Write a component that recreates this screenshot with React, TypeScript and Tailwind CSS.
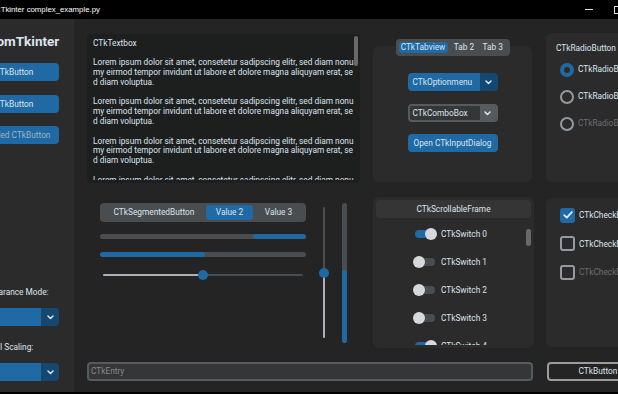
import React from "react";

const TXT = "text-[#dce4ee]";
const SM = "text-[8.3px] leading-none whitespace-nowrap";

function Chevron() {
  return (
    <svg width="7" height="5" viewBox="0 0 7 5" fill="none">
      <path d="M1 1L3.5 3.5L6 1" stroke="#dce4ee" strokeWidth="1.5" strokeLinecap="round" strokeLinejoin="round" />
    </svg>
  );
}

function OptionMenu({ label }: { label: string }) {
  return (
    <div className="flex h-[18px] w-[90px] rounded-[4px] overflow-hidden shrink-0">
      <div className={`flex-1 bg-[#1f6aa5] flex items-center pl-[5px] ${SM} ${TXT}`}>{label}</div>
      <div className="w-[18px] bg-[#144870] flex items-center justify-center">
        <Chevron />
      </div>
    </div>
  );
}

function ComboBox({ label }: { label: string }) {
  return (
    <div className="flex h-[18px] w-[90px] rounded-[4px] overflow-hidden border-2 border-[#565b5e] bg-[#343638] shrink-0">
      <div className={`flex-1 flex items-center pl-[3px] ${SM} ${TXT}`}>{label}</div>
      <div className="w-[16px] bg-[#565b5e] flex items-center justify-center">
        <Chevron />
      </div>
    </div>
  );
}

function Btn({ label, disabled }: { label: string; disabled?: boolean }) {
  return (
    <div
      className={`h-[18px] w-[90px] shrink-0 rounded-[4px] bg-[#1f6aa5] flex items-center justify-center ${SM} ${
        disabled ? "text-[#9fb1c2]" : TXT
      }`}
    >
      {label}
    </div>
  );
}

function Sidebar() {
  return (
    <div className="w-[74px] shrink-0 bg-[#2b2b2b] overflow-hidden">
      <div className="w-[90px] ml-[-31px] h-full flex flex-col items-center">
        <div className="mt-[13px] h-[20px] flex items-center justify-center">
          <span className={`text-[13.5px] font-bold leading-none whitespace-nowrap ${TXT}`}>CustomTkinter</span>
        </div>
        <div className="mt-[11px]">
          <Btn label="CTkButton" />
        </div>
        <div className="mt-[14px]">
          <Btn label="CTkButton" />
        </div>
        <div className="mt-[13px]">
          <Btn label="Disabled CTkButton" disabled />
        </div>
        <div className="flex-1" />
        <div className={`h-[12px] flex items-center ${SM} ${TXT}`}>Appearance Mode:</div>
        <div className="mt-[10px]">
          <OptionMenu label="Dark" />
        </div>
        <div className={`mt-[15px] h-[12px] flex items-center ${SM} ${TXT}`}>UI Scaling:</div>
        <div className="mt-[10px] mb-[11px]">
          <OptionMenu label="100%" />
        </div>
      </div>
    </div>
  );
}

const PARA = [
  "Lorem ipsum dolor sit amet, consetetur sadipscing elitr, sed diam nonu",
  "my eirmod tempor invidunt ut labore et dolore magna aliquyam erat, se",
  "d diam voluptua.",
];

function Textbox() {
  const lines: string[] = ["CTkTextbox", ""];
  for (let i = 0; i < 4; i++) {
    lines.push(...PARA, "");
  }
  return (
    <div className="mt-[1px] ml-[13px] w-[273px] h-[149px] shrink-0 rounded-[4px] bg-[#1d1e1e] flex">
      <div className="flex-1 pt-[4px] pl-[6px]">
        <div className="h-[142px] overflow-hidden">
          {lines.map((l, i) => (
            <div key={i} className={`h-[9.8px] flex items-center text-[8.3px] whitespace-nowrap ${TXT}`}>
              {l || "\u00a0"}
            </div>
          ))}
        </div>
      </div>
      <div className="w-[5px] mr-[2px] mt-[2px]">
        <div className="h-[30px] rounded-full bg-[#696969]" />
      </div>
    </div>
  );
}

function Tabview() {
  return (
    <div className="mt-[6px] ml-[13px] w-[159px] shrink-0 flex flex-col items-center">
      <div className="relative z-10 mb-[-10px] h-[17px] rounded-[4px] bg-[#4a4d50] p-[3px] flex items-stretch">
        <div className={`w-[49px] rounded-[3px] bg-[#1f6aa5] flex items-center justify-center ${SM} ${TXT}`}>CTkTabview</div>
        <div className={`w-[33px] flex items-center justify-center ${SM} ${TXT}`}>Tab 2</div>
        <div className={`w-[26px] flex items-center justify-start pl-[2px] ${SM} ${TXT}`}>Tab 3</div>
      </div>
      <div className="w-full h-[136px] rounded-[6px] bg-[#2b2b2b] flex flex-col items-center">
        <div className="mt-[27px]">
          <OptionMenu label="CTkOptionmenu" />
        </div>
        <div className="mt-[13px]">
          <ComboBox label="CTkComboBox" />
        </div>
        <div className="mt-[12px]">
          <Btn label="Open CTkInputDialog" />
        </div>
      </div>
    </div>
  );
}

function Radio({ checked, disabled }: { checked?: boolean; disabled?: boolean }) {
  return (
    <div className="h-[27px] flex items-center">
      {checked ? (
        <div className="w-[14px] h-[14px] rounded-full border-[4px] border-[#1f6aa5] bg-[#2b2b2b]" />
      ) : (
        <div className="w-[14px] h-[14px] rounded-full border-2 border-[#949a9f]" />
      )}
      <span className={`ml-[4px] ${SM} ${disabled ? "text-[#6c6e70]" : TXT}`}>CTkRadioButton</span>
    </div>
  );
}

function RadioFrame() {
  return (
    <div className="ml-[14px] w-[140px] h-[149px] shrink-0 rounded-[6px] bg-[#2b2b2b] flex flex-col">
      <div className={`mt-[9px] pl-[10px] h-[12px] flex items-center ${SM} ${TXT}`}>CTkRadioButton Group:</div>
      <div className="mt-[2px] pl-[14px] flex flex-col">
        <Radio checked />
        <Radio />
        <Radio disabled />
      </div>
    </div>
  );
}

function SliderArea() {
  return (
    <div className="ml-[13px] w-[273px] h-[151px] shrink-0 flex">
      <div className="ml-[13px] w-[206px] flex flex-col">
        <div className="mt-[6px] h-[19px] rounded-[4px] bg-[#4a4d50] p-[2px] flex">
          <div className={`w-[104px] flex items-center justify-center ${SM} ${TXT}`}>CTkSegmentedButton</div>
          <div className={`w-[47px] rounded-[3px] bg-[#1f6aa5] flex items-center justify-center ${SM} ${TXT}`}>Value 2</div>
          <div className={`flex-1 flex items-center justify-center ${SM} ${TXT}`}>Value 3</div>
        </div>
        <div className="mt-[12px] h-[5px] rounded-full bg-[#4a4d50] flex justify-end overflow-hidden">
          <div className="w-[53px] bg-[#1f6aa5] rounded-full" />
        </div>
        <div className="mt-[13px] h-[5px] rounded-full bg-[#4a4d50] flex overflow-hidden">
          <div className="w-[105px] bg-[#1f6aa5] rounded-full" />
        </div>
        <div className="mt-[13px] h-[10px] flex items-center px-[3px]">
          <div className="w-[100px] h-[2px] bg-[#aab0b5] rounded-l-full" />
          <div className="w-[10px] h-[10px] rounded-full bg-[#1f6aa5] mx-[-5px] relative" />
          <div className="flex-1 h-[2px] bg-[#4a4d50] rounded-r-full" />
        </div>
      </div>
      <div className="ml-[13px] mt-[10px] w-[10px] h-[131px] flex flex-col items-center">
        <div className="w-[2px] h-[66px] bg-[#4a4d50] rounded-t-full" />
        <div className="w-[10px] h-[10px] rounded-full bg-[#1f6aa5] my-[-5px] relative" />
        <div className="w-[2px] flex-1 bg-[#aab0b5] rounded-b-full" />
      </div>
      <div className="ml-[13px] mt-[6px] w-[5px] h-[140px] rounded-full bg-[#4a4d50] flex flex-col justify-end overflow-hidden">
        <div className="h-[73px] bg-[#1f6aa5] rounded-full" />
      </div>
    </div>
  );
}

function Switch({ on, n }: { on?: boolean; n: number }) {
  return (
    <div className="h-[28px] shrink-0 flex items-center">
      <div className="w-[24px] h-[12px] flex items-center relative">
        <div className={`absolute left-[2px] right-[2px] h-[8px] rounded-full ${on ? "bg-[#1f6aa5]" : "bg-[#4a4d50]"}`} />
        <div className={`relative w-[12px] h-[12px] rounded-full bg-[#d5d9de] ${on ? "ml-[12px]" : ""}`} />
      </div>
      <span className={`ml-[4px] ${SM} ${TXT}`}>CTkSwitch {n}</span>
    </div>
  );
}

function ScrollFrame() {
  return (
    <div className="ml-[13px] w-[161px] h-[151px] shrink-0 rounded-[6px] bg-[#2b2b2b] flex flex-col overflow-hidden">
      <div className={`mx-[3px] mt-[3px] h-[18px] rounded-[4px] bg-[#353535] flex items-center justify-center ${SM} ${TXT}`}>
        CTkScrollableFrame
      </div>
      <div className="flex-1 flex overflow-hidden">
        <div className="flex-1 pl-[40px] pt-[2px] h-[127px] overflow-hidden flex flex-col">
          <Switch on n={0} />
          <Switch n={1} />
          <Switch n={2} />
          <Switch n={3} />
          <Switch on n={4} />
        </div>
        <div className="w-[5px] mr-[3px] mt-[11px]">
          <div className="h-[17px] rounded-full bg-[#696969]" />
        </div>
      </div>
    </div>
  );
}

function Check({ checked, disabled }: { checked?: boolean; disabled?: boolean }) {
  return (
    <div className="h-[28.5px] flex items-center">
      {checked ? (
        <div className="w-[15px] h-[15px] rounded-[3px] bg-[#1f6aa5] flex items-center justify-center">
          <svg width="10" height="8" viewBox="0 0 10 8" fill="none">
            <path d="M1.2 4.2L3.8 6.6L8.8 1.2" stroke="#e6ebf0" strokeWidth="1.8" strokeLinecap="round" strokeLinejoin="round" />
          </svg>
        </div>
      ) : (
        <div className="w-[15px] h-[15px] rounded-[3px] border-2 border-[#949a9f]" />
      )}
      <span className={`ml-[4px] ${SM} ${disabled ? "text-[#6c6e70]" : TXT}`}>CTkCheckBox</span>
    </div>
  );
}

function CheckFrame() {
  return (
    <div className="ml-[12px] mt-[1px] w-[140px] h-[149px] shrink-0 rounded-[6px] bg-[#2b2b2b] flex flex-col pl-[14px] pt-[3px]">
      <Check checked />
      <Check />
      <Check disabled />
    </div>
  );
}

export default function App() {
  return (
    <div className="w-[618px] h-[394px] overflow-hidden bg-black font-['Roboto',sans-serif] flex flex-col">
      <div className="h-[19px] shrink-0 bg-black flex items-center overflow-hidden">
        <span className="ml-[-5px] text-[7.8px] leading-none text-white whitespace-nowrap font-['Segoe_UI','Liberation_Sans',sans-serif]">
          CTkinter complex_example.py
        </span>
        <div className="ml-auto flex items-center">
          <div className="w-[8px] h-[1px] bg-[#e0e0e0]" />
          <div className="ml-[21px] mr-[-5px] w-[9px] h-[8px] border border-[#e0e0e0]" />
        </div>
      </div>
      <div className="h-[373px] shrink-0 flex bg-[#242424]">
        <Sidebar />
        <div className="flex-1 flex flex-col overflow-hidden">
          <div className="mt-[14px] flex items-start">
            <Textbox />
            <Tabview />
            <RadioFrame />
          </div>
          <div className="mt-[14px] flex items-start">
            <SliderArea />
            <ScrollFrame />
            <CheckFrame />
          </div>
          <div className="mt-[14px] flex items-start">
            <div className="ml-[13px] w-[446px] h-[19px] shrink-0 rounded-[4px] border-2 border-[#565b5e] bg-[#343638] flex items-center pl-[2px]">
              <span className={`${SM} text-[#8a8a8a]`}>CTkEntry</span>
            </div>
            <div className={`ml-[14px] w-[102px] h-[19px] shrink-0 rounded-[4px] border-2 border-[#9a9c9e] flex items-center justify-center ${SM} ${TXT}`}>
              CTkButton
            </div>
          </div>
        </div>
      </div>
    </div>
  );
}
